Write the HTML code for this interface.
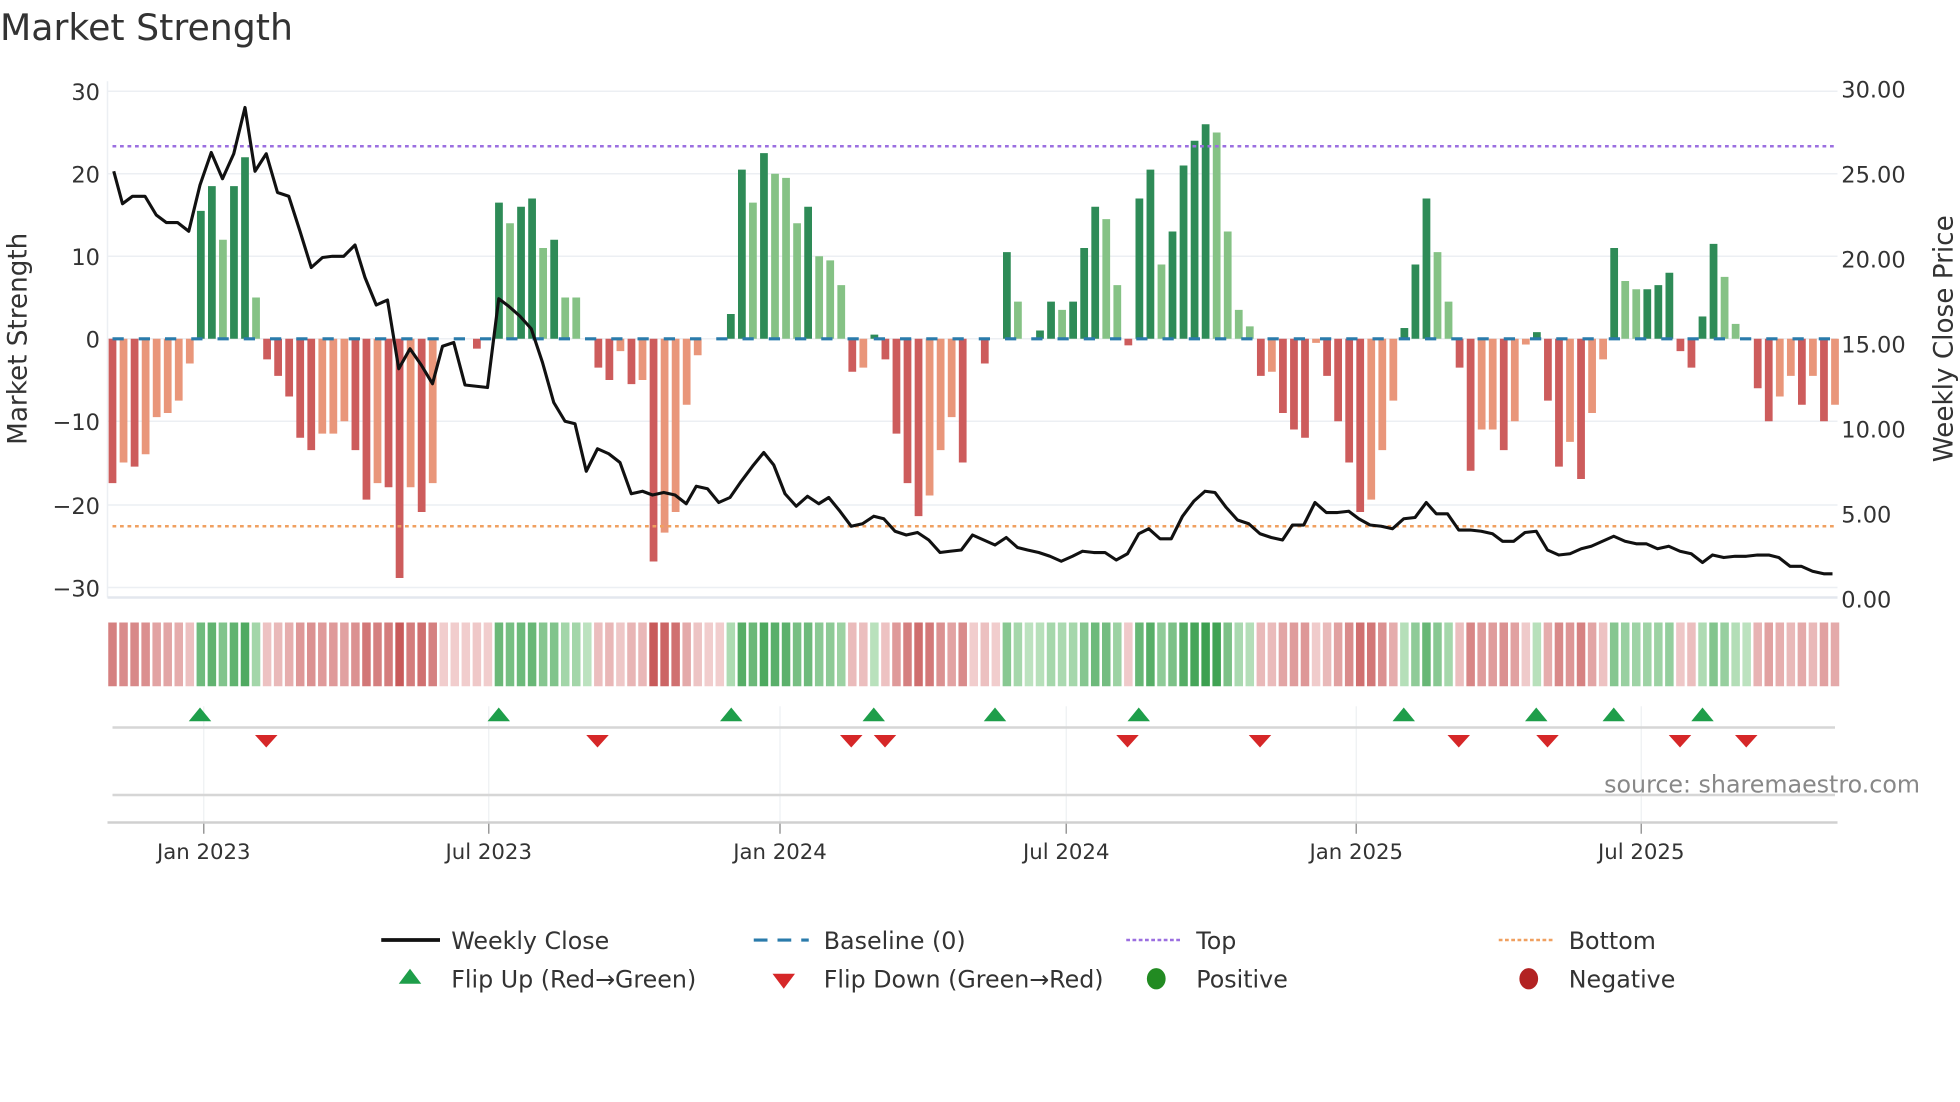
<!DOCTYPE html>
<html><head><meta charset="utf-8"><style>
html,body{margin:0;padding:0;background:#fff;width:1960px;height:1102px;overflow:hidden}
svg{display:block}
text{font-family:"DejaVu Sans","Liberation Sans",sans-serif;fill:#333}
</style></head><body>
<svg id="s" width="1960" height="1102" viewBox="0 0 1568 881.6" xmlns="http://www.w3.org/2000/svg">
<text x="0" y="32" font-size="29">Market Strength</text>
<g id="grid"></g>
<g id="bars"></g>
<line x1="90" y1="271" x2="1470" y2="271" stroke="#2a7bab" stroke-width="2.5" stroke-dasharray="9 12"/>
<line x1="90" y1="117" x2="1470" y2="117" stroke="#9b6fe0" stroke-width="2" stroke-dasharray="3 3"/>
<line x1="90" y1="421" x2="1470" y2="421" stroke="#f0a060" stroke-width="2" stroke-dasharray="3 3"/>
<polyline id="price" fill="none" stroke="#111" stroke-width="2.5" stroke-linejoin="round"/>
<g id="strip"></g>
<g id="lower"></g>
<g font-size="18" text-anchor="end">
<text x="80" y="80">30</text><text x="80" y="146">20</text><text x="80" y="212">10</text><text x="80" y="278">0</text>
<text x="80" y="344">−10</text><text x="80" y="411">−20</text><text x="80" y="477">−30</text>
</g>
<g font-size="18">
<text x="1473" y="78">30.00</text><text x="1473" y="146">25.00</text><text x="1473" y="214">20.00</text><text x="1473" y="282">15.00</text>
<text x="1473" y="350">10.00</text><text x="1473" y="418">5.00</text><text x="1473" y="486">0.00</text>
</g>
<text transform="translate(21,271) rotate(-90)" font-size="21" text-anchor="middle">Market Strength</text>
<text transform="translate(1562,271) rotate(-90)" font-size="21" text-anchor="middle">Weekly Close Price</text>
<text x="1536" y="634" font-size="19" text-anchor="end" style="fill:#888">source: sharemaestro.com</text>
<g font-size="17" text-anchor="middle">
<text x="163" y="687">Jan 2023</text><text x="391" y="687">Jul 2023</text><text x="624" y="687">Jan 2024</text>
<text x="853" y="687">Jul 2024</text><text x="1085" y="687">Jan 2025</text><text x="1313" y="687">Jul 2025</text>
</g>
<g font-size="19">
<line x1="305" y1="752" x2="352" y2="752" stroke="#111" stroke-width="3"/><text x="361" y="759">Weekly Close</text>
<line x1="603" y1="752" x2="647" y2="752" stroke="#2a7bab" stroke-width="2.5" stroke-dasharray="11 8"/><text x="659" y="759">Baseline (0)</text>
<line x1="901" y1="752" x2="945" y2="752" stroke="#9b6fe0" stroke-width="2" stroke-dasharray="3 2"/><text x="957" y="759">Top</text>
<line x1="1199" y1="752" x2="1243" y2="752" stroke="#f0a060" stroke-width="2" stroke-dasharray="3 2"/><text x="1255" y="759">Bottom</text>
<polygon points="328,775 337,787 319,787" fill="#1e9e4a"/><text x="361" y="790">Flip Up (Red→Green)</text>
<polygon points="618,779 636,779 627,791" fill="#d62728"/><text x="659" y="790">Flip Down (Green→Red)</text>
<ellipse cx="925" cy="783" rx="7.5" ry="8.5" fill="#228b22"/><text x="957" y="790">Positive</text>
<ellipse cx="1223" cy="783" rx="7.5" ry="8.5" fill="#b22222"/><text x="1255" y="790">Negative</text>
</g>
</svg>
<script>
var NS="http://www.w3.org/2000/svg";
function el(p,t,a){var e=document.createElementNS(NS,t);for(var k in a)e.setAttribute(k,a[k]);p.appendChild(e);return e;}
var B=[[-17.5,1],[-15,0],[-15.5,1],[-14,0],[-9.5,0],[-9,0],[-7.5,0],[-3,0],[15.5,1],[18.5,1],[12,0],[18.5,1],[22,1],[5,0],[-2.5,1],[-4.5,1],[-7,1],[-12,1],[-13.5,1],[-11.5,0],[-11.5,0],[-10,0],[-13.5,1],[-19.5,1],[-17.5,0],[-18,1],[-29,1],[-18,0],[-21,1],[-17.5,0],[0,0],[0,0],[0,0],[-1.2,1],[0,0],[16.5,1],[14,0],[16,1],[17,1],[11,0],[12,1],[5,0],[5,0],[0,0],[-3.5,1],[-5,1],[-1.5,0],[-5.5,1],[-5,0],[-27,1],[-23.5,0],[-21,0],[-8,0],[-2,0],[0,0],[0,0],[3,1],[20.5,1],[16.5,0],[22.5,1],[20,0],[19.5,0],[14,0],[16,1],[10,0],[9.5,0],[6.5,0],[-4,1],[-3.5,0],[0.5,1],[-2.5,1],[-11.5,1],[-17.5,1],[-21.5,1],[-19,0],[-13.5,0],[-9.5,0],[-15,1],[0,0],[-3,1],[0,0],[10.5,1],[4.5,0],[0,0],[1,1],[4.5,1],[3.5,0],[4.5,1],[11,1],[16,1],[14.5,0],[6.5,0],[-0.8,1],[17,1],[20.5,1],[9,0],[13,1],[21,1],[24,1],[26,1],[25,0],[13,0],[3.5,0],[1.5,0],[-4.5,1],[-4,0],[-9,1],[-11,1],[-12,1],[-0.5,0],[-4.5,1],[-10,1],[-15,1],[-21,1],[-19.5,0],[-13.5,0],[-7.5,0],[1.3,1],[9,1],[17,1],[10.5,0],[4.5,0],[-3.5,1],[-16,1],[-11,0],[-11,0],[-13.5,1],[-10,0],[-0.7,0],[0.8,1],[-7.5,1],[-15.5,1],[-12.5,0],[-17,1],[-9,0],[-2.5,0],[11,1],[7,0],[6,0],[6,1],[6.5,1],[8,1],[-1.5,1],[-3.5,1],[2.7,1],[11.5,1],[7.5,0],[1.8,0],[0,0],[-6,1],[-10,1],[-7,0],[-4.5,0],[-8,1],[-4.5,0],[-10,1],[-8,0]];
var n=B.length,x0=90,dx=(1468-90)/(n-1);
var g=document.getElementById('grid');
[73,139,205,271,337,404,470].forEach(function(y){el(g,'line',{x1:86,x2:1470,y1:y,y2:y,stroke:'#eceff3','stroke-width':1.2});});
el(g,'line',{x1:86,x2:86,y1:65,y2:478,stroke:'#eceff3','stroke-width':1.2});
el(g,'line',{x1:86,x2:1470,y1:478,y2:478,stroke:'#e3e7ee','stroke-width':2});
var bg=document.getElementById('bars'),sg=document.getElementById('strip');
function mix(a,b,t){return 'rgb('+[0,1,2].map(function(i){return Math.round(a[i]+(b[i]-a[i])*t)}).join(',')+')';}
var last=-1;
B.forEach(function(b,i){
 var x=x0+i*dx,v=b[0];
 if(v!==0){var h=Math.abs(v)*6.6;
  var c=v>0?(b[1]?'#2e8b57':'#85c285'):(b[1]?'#cd5c5c':'#e9967a');
  el(bg,'rect',{x:x-3.1,width:6.2,y:v>0?271-h:271,height:h,fill:c});}
 var s=v>0?1:(v<0?-1:last); if(v!==0)last=s;
 var t=Math.min(1,Math.abs(v)/26);
 var col=s>0?mix([210,238,210],[60,160,80],0.15+0.85*t):mix([245,218,218],[200,90,90],0.1+0.9*t);
 el(sg,'rect',{x:x-3.4,width:6.8,y:498,height:51,fill:col});
});
var P=[[91,137],[98,163],[106,157],[116,157],[125,172],[133,178],[142,178],[151,185],[160,148],[169,122],[178,143],[187,123],[196,86],[204,137],[213,123],[222,154],[231,157],[240,185],[249,214],[258,206],[266,205],[275,205],[284,196],[292,222],[301,244],[310,240],[319,295],[328,279],[337,292],[346,307],[354,277],[363,274],[372,308],[381,309],[390,310],[399,239],[407,245],[416,253],[425,263],[434,290],[443,322],[452,337],[460,339],[469,377],[478,359],[487,363],[496,370],[505,395],[514,393],[522,396],[531,394],[540,396],[549,403],[557,389],[566,391],[575,402],[584,398],[593,385],[602,373],[611,362],[619,372],[628,395],[637,405],[646,397],[655,403],[663,398],[672,409],[681,421],[690,419],[699,413],[707,415],[716,425],[725,428],[734,426],[743,432],[752,442],[760,441],[769,440],[778,428],[787,432],[796,436],[805,430],[814,438],[822,440],[831,442],[840,445],[849,449],[858,445],[866,441],[875,442],[884,442],[893,448],[902,443],[911,427],[919,423],[928,431],[937,431],[946,413],[955,401],[964,393],[972,394],[981,406],[990,416],[999,419],[1008,427],[1017,430],[1026,432],[1034,420],[1043,420],[1052,402],[1061,410],[1070,410],[1079,409],[1087,415],[1096,420],[1105,421],[1114,423],[1123,415],[1132,414],[1141,402],[1149,411],[1158,411],[1167,424],[1176,424],[1185,425],[1194,427],[1202,433],[1211,433],[1220,426],[1229,425],[1238,440],[1247,444],[1256,443],[1265,439],[1273,437],[1282,433],[1291,429],[1300,433],[1309,435],[1317,435],[1326,439],[1335,437],[1344,441],[1353,443],[1362,450],[1370,444],[1379,446],[1388,445],[1397,445],[1406,444],[1415,444],[1423,446],[1432,453],[1441,453],[1450,457],[1459,459],[1466,459]];
document.getElementById('price').setAttribute('points',P.map(function(p){return p.join(',')}).join(' '));
var L=document.getElementById('lower');
[163,391,624,853,1085,1313].forEach(function(x){
 el(L,'line',{x1:x,x2:x,y1:565,y2:658,stroke:'#eef0f3','stroke-width':1});
 el(L,'line',{x1:x,x2:x,y1:658,y2:667,stroke:'#999','stroke-width':1.2});
});
el(L,'line',{x1:90,x2:1468,y1:582,y2:582,stroke:'#d6d6d6','stroke-width':2});
el(L,'line',{x1:90,x2:1468,y1:636,y2:636,stroke:'#d6d6d6','stroke-width':2});
el(L,'line',{x1:86,x2:1470,y1:658,y2:658,stroke:'#d0d0d0','stroke-width':2});
[160,399,585,699,796,911,1123,1229,1291,1362].forEach(function(x){
 el(L,'polygon',{points:(x)+',566 '+(x+9)+',577 '+(x-9)+',577',fill:'#1e9e4a'});});
[213,478,681,708,902,1008,1167,1238,1344,1397].forEach(function(x){
 el(L,'polygon',{points:(x-9)+',588 '+(x+9)+',588 '+x+',598',fill:'#d62728'});});
</script>
</body></html>
